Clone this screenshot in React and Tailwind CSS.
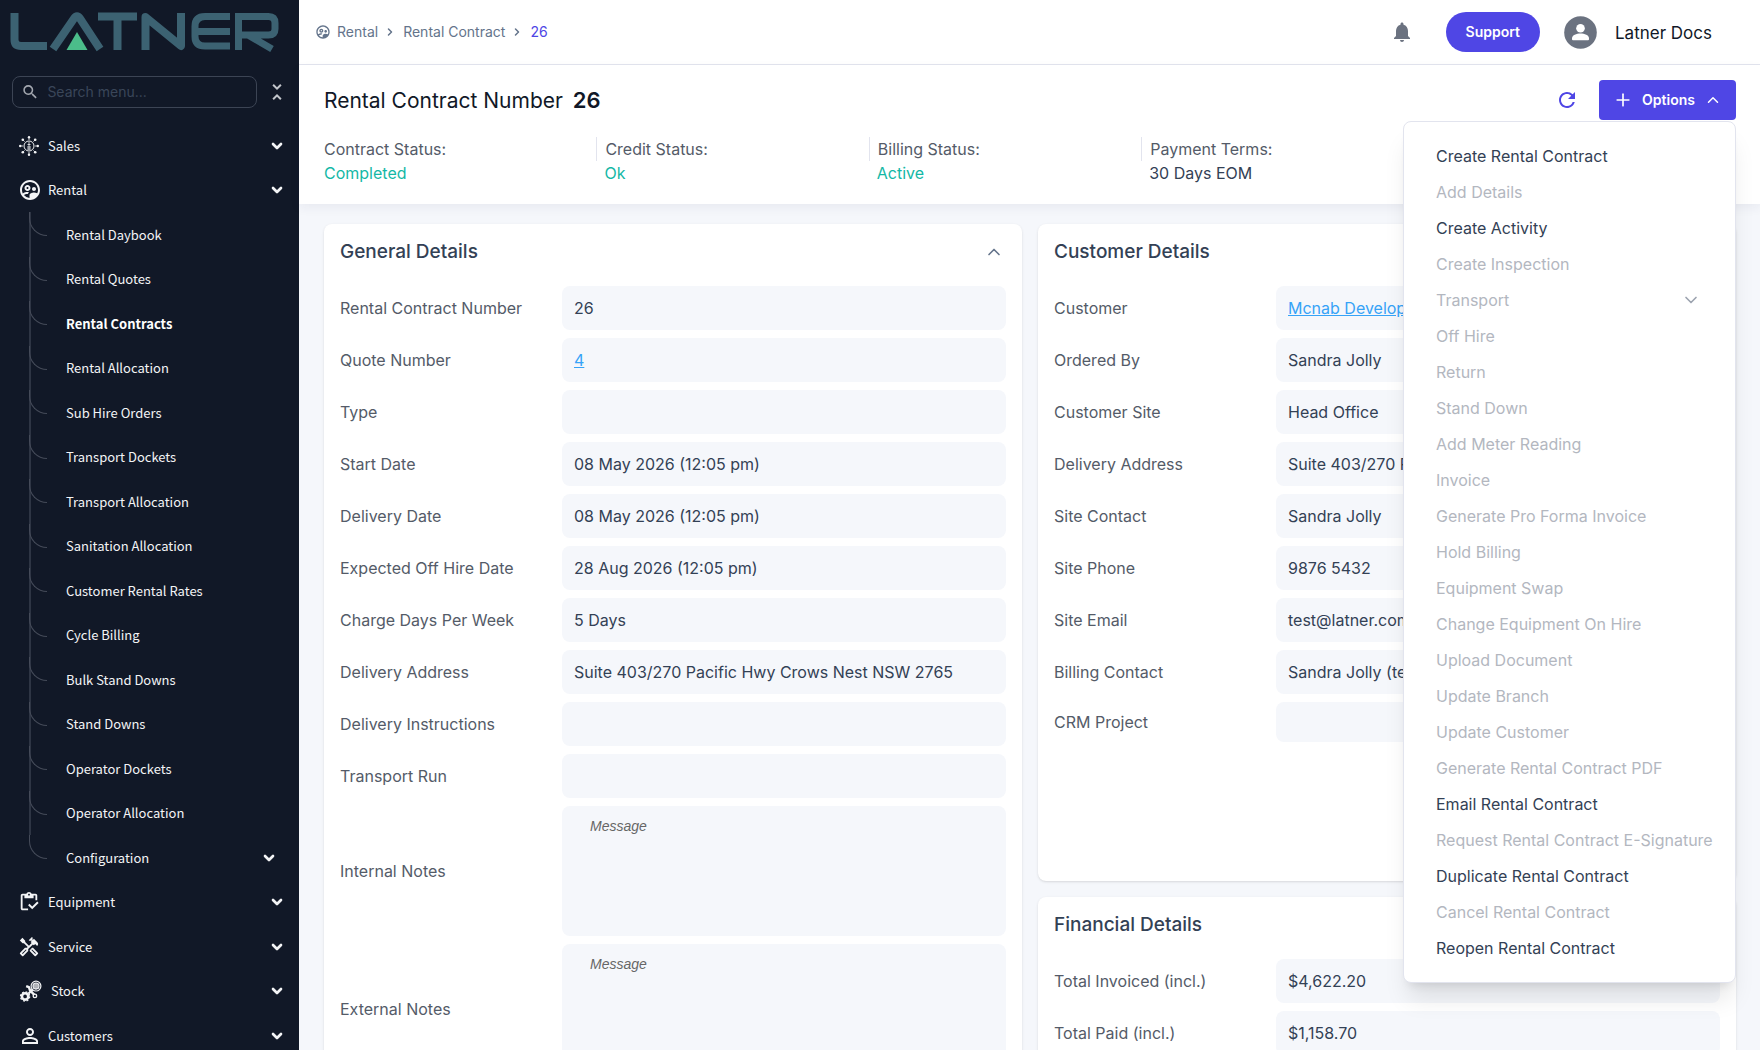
import { ChevronDown, ChevronUp, ChevronRight, Plus } from 'lucide-react'
import {
  MdNotifications, MdOutlineHandyman, MdOutlineInventory,
  MdOutlineSupervisedUserCircle, MdPersonOutline, MdRefresh, MdSearch, MdUnfoldLess,
} from 'react-icons/md'

const RENTAL_ITEMS = [
  'Rental Daybook', 'Rental Quotes', 'Rental Contracts', 'Rental Allocation', 'Sub Hire Orders',
  'Transport Dockets', 'Transport Allocation', 'Sanitation Allocation', 'Customer Rental Rates',
  'Cycle Billing', 'Bulk Stand Downs', 'Stand Downs', 'Operator Dockets', 'Operator Allocation',
  'Configuration',
]

const STATUSES = [
  { label: 'Contract Status:', value: 'Completed', ok: true },
  { label: 'Credit Status:', value: 'Ok', ok: true },
  { label: 'Billing Status:', value: 'Active', ok: true },
  { label: 'Payment Terms:', value: '30 Days EOM' },
]

const GENERAL = [
  { label: 'Rental Contract Number', value: '26' },
  { label: 'Quote Number', value: '4', link: true },
  { label: 'Type', value: '' },
  { label: 'Start Date', value: '08 May 2026 (12:05 pm)' },
  { label: 'Delivery Date', value: '08 May 2026 (12:05 pm)' },
  { label: 'Expected Off Hire Date', value: '28 Aug 2026 (12:05 pm)' },
  { label: 'Charge Days Per Week', value: '5 Days' },
  { label: 'Delivery Address', value: 'Suite 403/270 Pacific Hwy Crows Nest NSW 2765' },
  { label: 'Delivery Instructions', value: '' },
  { label: 'Transport Run', value: '' },
]

const CUSTOMER = [
  { label: 'Customer', value: 'Mcnab Developments', link: true },
  { label: 'Ordered By', value: 'Sandra Jolly' },
  { label: 'Customer Site', value: 'Head Office' },
  { label: 'Delivery Address', value: 'Suite 403/270 Pacific Hwy' },
  { label: 'Site Contact', value: 'Sandra Jolly' },
  { label: 'Site Phone', value: '9876 5432' },
  { label: 'Site Email', value: 'test@latner.com' },
  { label: 'Billing Contact', value: 'Sandra Jolly (test@latner.com)' },
]

const FINANCIAL = [
  { label: 'Total Invoiced (incl.)', value: '$4,622.20' },
  { label: 'Total Paid (incl.)', value: '$1,158.70' },
]

const OPTIONS = [
  { label: 'Create Rental Contract', on: true },
  { label: 'Add Details' },
  { label: 'Create Activity', on: true },
  { label: 'Create Inspection' },
  { label: 'Transport', sub: true },
  { label: 'Off Hire' },
  { label: 'Return' },
  { label: 'Stand Down' },
  { label: 'Add Meter Reading' },
  { label: 'Invoice' },
  { label: 'Generate Pro Forma Invoice' },
  { label: 'Hold Billing' },
  { label: 'Equipment Swap' },
  { label: 'Change Equipment On Hire' },
  { label: 'Upload Document' },
  { label: 'Update Branch' },
  { label: 'Update Customer' },
  { label: 'Generate Rental Contract PDF' },
  { label: 'Email Rental Contract', on: true },
  { label: 'Request Rental Contract E-Signature' },
  { label: 'Duplicate Rental Contract', on: true },
  { label: 'Cancel Rental Contract' },
  { label: 'Reopen Rental Contract', on: true },
]

function Logo() {
  return (
    <svg className="w-[270px] h-10" viewBox="0 0 270 40" fill="none" stroke="#3c6272" strokeWidth="8" aria-label="Latner" role="img">
      <path d="M4.500 1v26.500q0 6.500 6.500 6.500H37" />
      <path d="M43 37 64 6.500q3-4.500 6 0L90 37" strokeLinejoin="round" />
      <path d="M88 4.500h39M107.500 4.500V38" />
      <path d="M135.500 38V5L171 34V1" strokeLinejoin="round" />
      <path d="M220 4.500h-25q-10 0-10 10v10q0 9.500 10 9.500h25M186 19.500h34" strokeWidth="7" />
      <path d="M228.500 38V4.500h30q6.500 0 6.500 6.500v6q0 6-6.500 6H232M238 23l24 14" strokeWidth="7" />
      <path d="m67 20 10.500 18h-21z" fill="#4bbd8a" stroke="none" />
    </svg>
  )
}

function SalesIcon() {
  return (
    <svg className="w-[22px] h-[22px]" viewBox="-1 -1 22 22" fill="none" stroke="currentColor">
      <circle cx="10" cy="10" r="5" />
      <path d="M10 6v8M8.500 8.500h3M8 11h4M8 13h4M10 1v3M10 16v3M1 10h3M16 10h3M3.600 3.600l2 2M14.400 14.400l2 2M16.400 3.600l-2 2M5.600 14.400l-2 2" strokeWidth=".8" />
      <g fill="currentColor" stroke="none">
        <circle cx="10" cy="1.200" r="1.200" /><circle cx="10" cy="18.800" r="1.200" />
        <circle cx="1.200" cy="10" r="1.200" /><circle cx="18.800" cy="10" r="1.200" />
        <circle cx="3.800" cy="3.800" r="1.300" /><circle cx="16.200" cy="3.800" r="1.300" />
        <circle cx="3.800" cy="16.200" r="1.300" /><circle cx="16.200" cy="16.200" r="1.300" />
      </g>
    </svg>
  )
}

function StockIcon() {
  return (
    <svg className="w-6 h-[22px]" viewBox="-2 0 22 20" fill="none" stroke="currentColor">
      <circle cx="14.500" cy="5.500" r="2.800" fill="currentColor" fillOpacity=".7" />
      <circle cx="14.500" cy="5.500" r="4.500" strokeWidth="1.100" />
      <path d="M5.500 5.500 8 6.500l1 3 4 4" strokeWidth="2.200" />
      <path d="m7.500 12.500 4-4" strokeWidth="2" />
      <circle cx="4.500" cy="15" r="2.900" strokeWidth="2.400" />
      <circle cx="4.500" cy="15" r="4.200" strokeWidth="1.200" strokeDasharray="1.700 1.600" />
      <circle cx="13.500" cy="14.500" r="1.600" strokeWidth="1.300" />
    </svg>
  )
}

function Avatar() {
  return (
    <svg className="w-[33px] h-[33px]" viewBox="0 0 33 33">
      <circle cx="16.500" cy="16.500" r="16.300" fill="#6b7280" />
      <circle cx="16.500" cy="12.200" r="4.300" fill="#fff" />
      <path d="M8 22.500c0-3.600 4.500-5 8.500-5s8.500 1.400 8.500 5v.7q0 1-1 1H9q-1 0-1-1z" fill="#fff" />
    </svg>
  )
}

function NavRow({ icon, label, wide }) {
  return (
    <button type="button" className="w-full h-full flex items-center pl-[18px] pr-[14px] text-left">
      <span className={wide ? 'w-[33px] shrink-0' : 'w-[30px] shrink-0'}>{icon}</span>
      <span className="flex-1">{label}</span>
      <ChevronDown className="w-4 h-4" strokeWidth={4} />
    </button>
  )
}

function Sidebar() {
  return (
    <aside className="w-[299px] shrink-0 bg-[#111827] text-[#f3f4f6] h-screen overflow-hidden">
      <div className="pt-3 px-[10px]"><Logo /></div>
      <div className="flex items-center gap-3 mt-6 ml-3 mr-[10px]">
        <label className="flex-1 flex items-center h-8 border border-[#3c4454] rounded-lg pl-2">
          <MdSearch className="w-5 h-5 text-[#a3a7af]" />
          <input
            type="text"
            aria-label="Search menu"
            placeholder="Search menu..."
            className="w-full bg-transparent text-sm pl-2 outline-none placeholder:text-[#3a4659]"
          />
        </label>
        <button type="button" aria-label="Collapse menu" className="-ml-1"><MdUnfoldLess className="w-6 h-6 text-[#c3c6cc]" /></button>
      </div>
      <ul className="mt-[15px] text-[13px] font-['Noto_Sans_CJK_SC',sans-serif]">
        <li className="h-[45px]"><NavRow icon={<SalesIcon />} label="Sales" /></li>
        <li className="h-11"><NavRow icon={<MdOutlineSupervisedUserCircle className="w-6 h-6" />} label="Rental" /></li>
        <li>
          <ul>
            {RENTAL_ITEMS.map((item) => (
              <li key={item} className="group h-11 odd:h-[45px] flex items-center ml-[29px] pr-[22px]">
                <span className="relative w-[37px] h-full shrink-0 border-l-2 border-[#2e3544] group-last:border-transparent">
                  <span className="absolute -left-0.5 top-0 w-[18px] h-6 border-l border-b border-[#454b59] rounded-bl-[18px]" />
                </span>
                <a href="#" className={item === 'Rental Contracts' ? 'flex-1 font-bold text-white' : 'flex-1'}>{item}</a>
                {item === 'Configuration' && <ChevronDown className="w-4 h-4" strokeWidth={4} />}
              </li>
            ))}
          </ul>
        </li>
        <li className="h-11"><NavRow icon={<MdOutlineInventory className="w-[22px] h-[22px]" />} label="Equipment" /></li>
        <li className="h-[45px]"><NavRow icon={<MdOutlineHandyman className="w-[22px] h-[22px]" />} label="Service" /></li>
        <li className="h-11"><NavRow icon={<StockIcon />} label="Stock" wide /></li>
        <li className="h-[45px]"><NavRow icon={<MdPersonOutline className="w-6 h-6" />} label="Customers" /></li>
      </ul>
    </aside>
  )
}

function Topbar() {
  return (
    <header className="h-[65px] border-b border-[#e2e4ee] bg-white flex items-center justify-between pl-4 pr-12">
      <nav className="flex items-center gap-1.5 text-sm text-[#64748b]">
        <MdOutlineSupervisedUserCircle className="w-4 h-4" />
        <a href="#">Rental</a>
        <ChevronRight className="w-3 h-3 mr-px" strokeWidth={3} />
        <a href="#">Rental Contract</a>
        <ChevronRight className="w-3 h-3 mr-px" strokeWidth={3} />
        <span className="text-[#4f46e5]">26</span>
      </nav>
      <div className="flex items-center">
        <button type="button" aria-label="Notifications"><MdNotifications className="w-6 h-6 text-[#6b7280]" /></button>
        <button type="button" className="ml-8 h-10 px-5 rounded-full bg-[#4f46e5] text-white text-sm font-semibold">Support</button>
        <button type="button" className="ml-6 flex items-center gap-4 text-[17px] leading-7 text-[#111827]">
          <Avatar />
          <span className="pl-0.5 pt-0.5">Latner Docs</span>
        </button>
      </div>
    </header>
  )
}

function OptionsMenu() {
  return (
    <ul className="absolute right-0 top-[41px] z-10 w-[333px] bg-white border border-[#e2e4ee] rounded-lg shadow-xl py-4">
      {OPTIONS.map(({ label, on, sub }) => (
        <li key={label}>
          <button
            type="button"
            disabled={!on}
            className="w-full h-9 pl-8 pr-[34px] flex items-center justify-between whitespace-nowrap text-[#334155] disabled:text-[#b3b7bf]"
          >
            {label}
            {sub && <ChevronDown className="w-5 h-5 text-[#9ca3af]" />}
          </button>
        </li>
      ))}
    </ul>
  )
}

function PageHead() {
  return (
    <section className="relative z-10 bg-white pl-[25px] pr-6 pt-[15px] h-[139px] shadow-[0_4px_10px_rgba(30,40,80,0.06)]">
      <div className="flex items-center justify-between">
        <h1 className="text-[21px] text-[#111827]">Rental Contract Number <b className="ml-1 text-[22px] font-semibold">26</b></h1>
        <div className="relative flex items-center gap-5">
          <button type="button" aria-label="Refresh"><MdRefresh className="w-6 h-6 text-[#4f46e5]" /></button>
          <button type="button" className="h-10 w-[137px] flex items-center justify-between px-[14px] rounded bg-[#4f46e5] text-white text-sm font-semibold">
            <Plus className="w-5 h-5" />
            Options
            <ChevronUp className="w-[18px] h-[18px]" />
          </button>
          <OptionsMenu />
        </div>
      </div>
      <dl className="mt-[17px] mr-[50px] grid grid-cols-5 leading-6">
        {STATUSES.map(({ label, value, ok }) => (
          <div key={label} className="group">
            <dt className="text-[#545b68] h-6 flex items-center group-not-first:border-l group-not-first:border-[#e2e4ee] group-not-first:pl-2">{label}</dt>
            <dd className={ok ? 'text-[#14b8a6] group-not-first:pl-2' : 'text-[#334155] group-not-first:pl-2'}>{value}</dd>
          </div>
        ))}
      </dl>
    </section>
  )
}

function Card({ title, className = '', open, children }) {
  return (
    <section className={`bg-white rounded-lg shadow-sm px-4 ${className}`}>
      <div className="h-[62px] pb-1.5 flex items-center justify-between">
        <h2 className="text-[19px] font-medium text-[#334155]">{title}</h2>
        {open && <button type="button" aria-label="Collapse" className="mr-0.5"><ChevronUp className="w-5 h-5 text-[#64748b]" /></button>}
      </div>
      <div className="space-y-2">{children}</div>
    </section>
  )
}

function Field({ label, value, link, short }) {
  return (
    <div className="grid grid-cols-3 items-center">
      <span className="text-[#545b68]">{label}</span>
      <div className={`col-span-2 ${short ? 'h-10' : 'h-11'} flex items-center px-3 bg-[#f5f7fb] rounded-lg text-[#334155] whitespace-nowrap overflow-hidden`}>
        {link ? <a href="#" className="text-[#36a3f7] underline">{value}</a> : value}
      </div>
    </div>
  )
}

function Notes({ label }) {
  return (
    <label className="grid grid-cols-3 items-center">
      <span className="text-[#545b68]">{label}</span>
      <textarea
        placeholder="Message"
        className="col-span-2 block h-[130px] resize-none rounded-lg bg-[#f5f7fb] px-7 py-2 font-['Liberation_Sans',sans-serif] text-sm leading-6 italic placeholder:text-[#666666]"
      />
    </label>
  )
}

export default function App() {
  return (
    <div className="flex h-screen overflow-hidden font-['Inter',sans-serif] text-base">
      <Sidebar />
      <div className="flex-1 min-w-0 flex flex-col bg-[#f5f7fb]">
        <Topbar />
        <PageHead />
        <main className="flex-1 min-h-0 overflow-hidden grid grid-cols-2 gap-4 pt-5 pl-[25px] pr-6">
          <Card title="General Details" open>
            {GENERAL.map((f) => <Field key={f.label} {...f} />)}
            <Notes label="Internal Notes" />
            <Notes label="External Notes" />
          </Card>
          <div className="space-y-4">
            <Card title="Customer Details" className="pb-[139px]">
              {CUSTOMER.map((f) => <Field key={f.label} {...f} />)}
              <Field label="CRM Project" value="" short />
            </Card>
            <Card title="Financial Details" className="pb-4">
              {FINANCIAL.map((f) => <Field key={f.label} {...f} />)}
            </Card>
          </div>
        </main>
      </div>
    </div>
  )
}
